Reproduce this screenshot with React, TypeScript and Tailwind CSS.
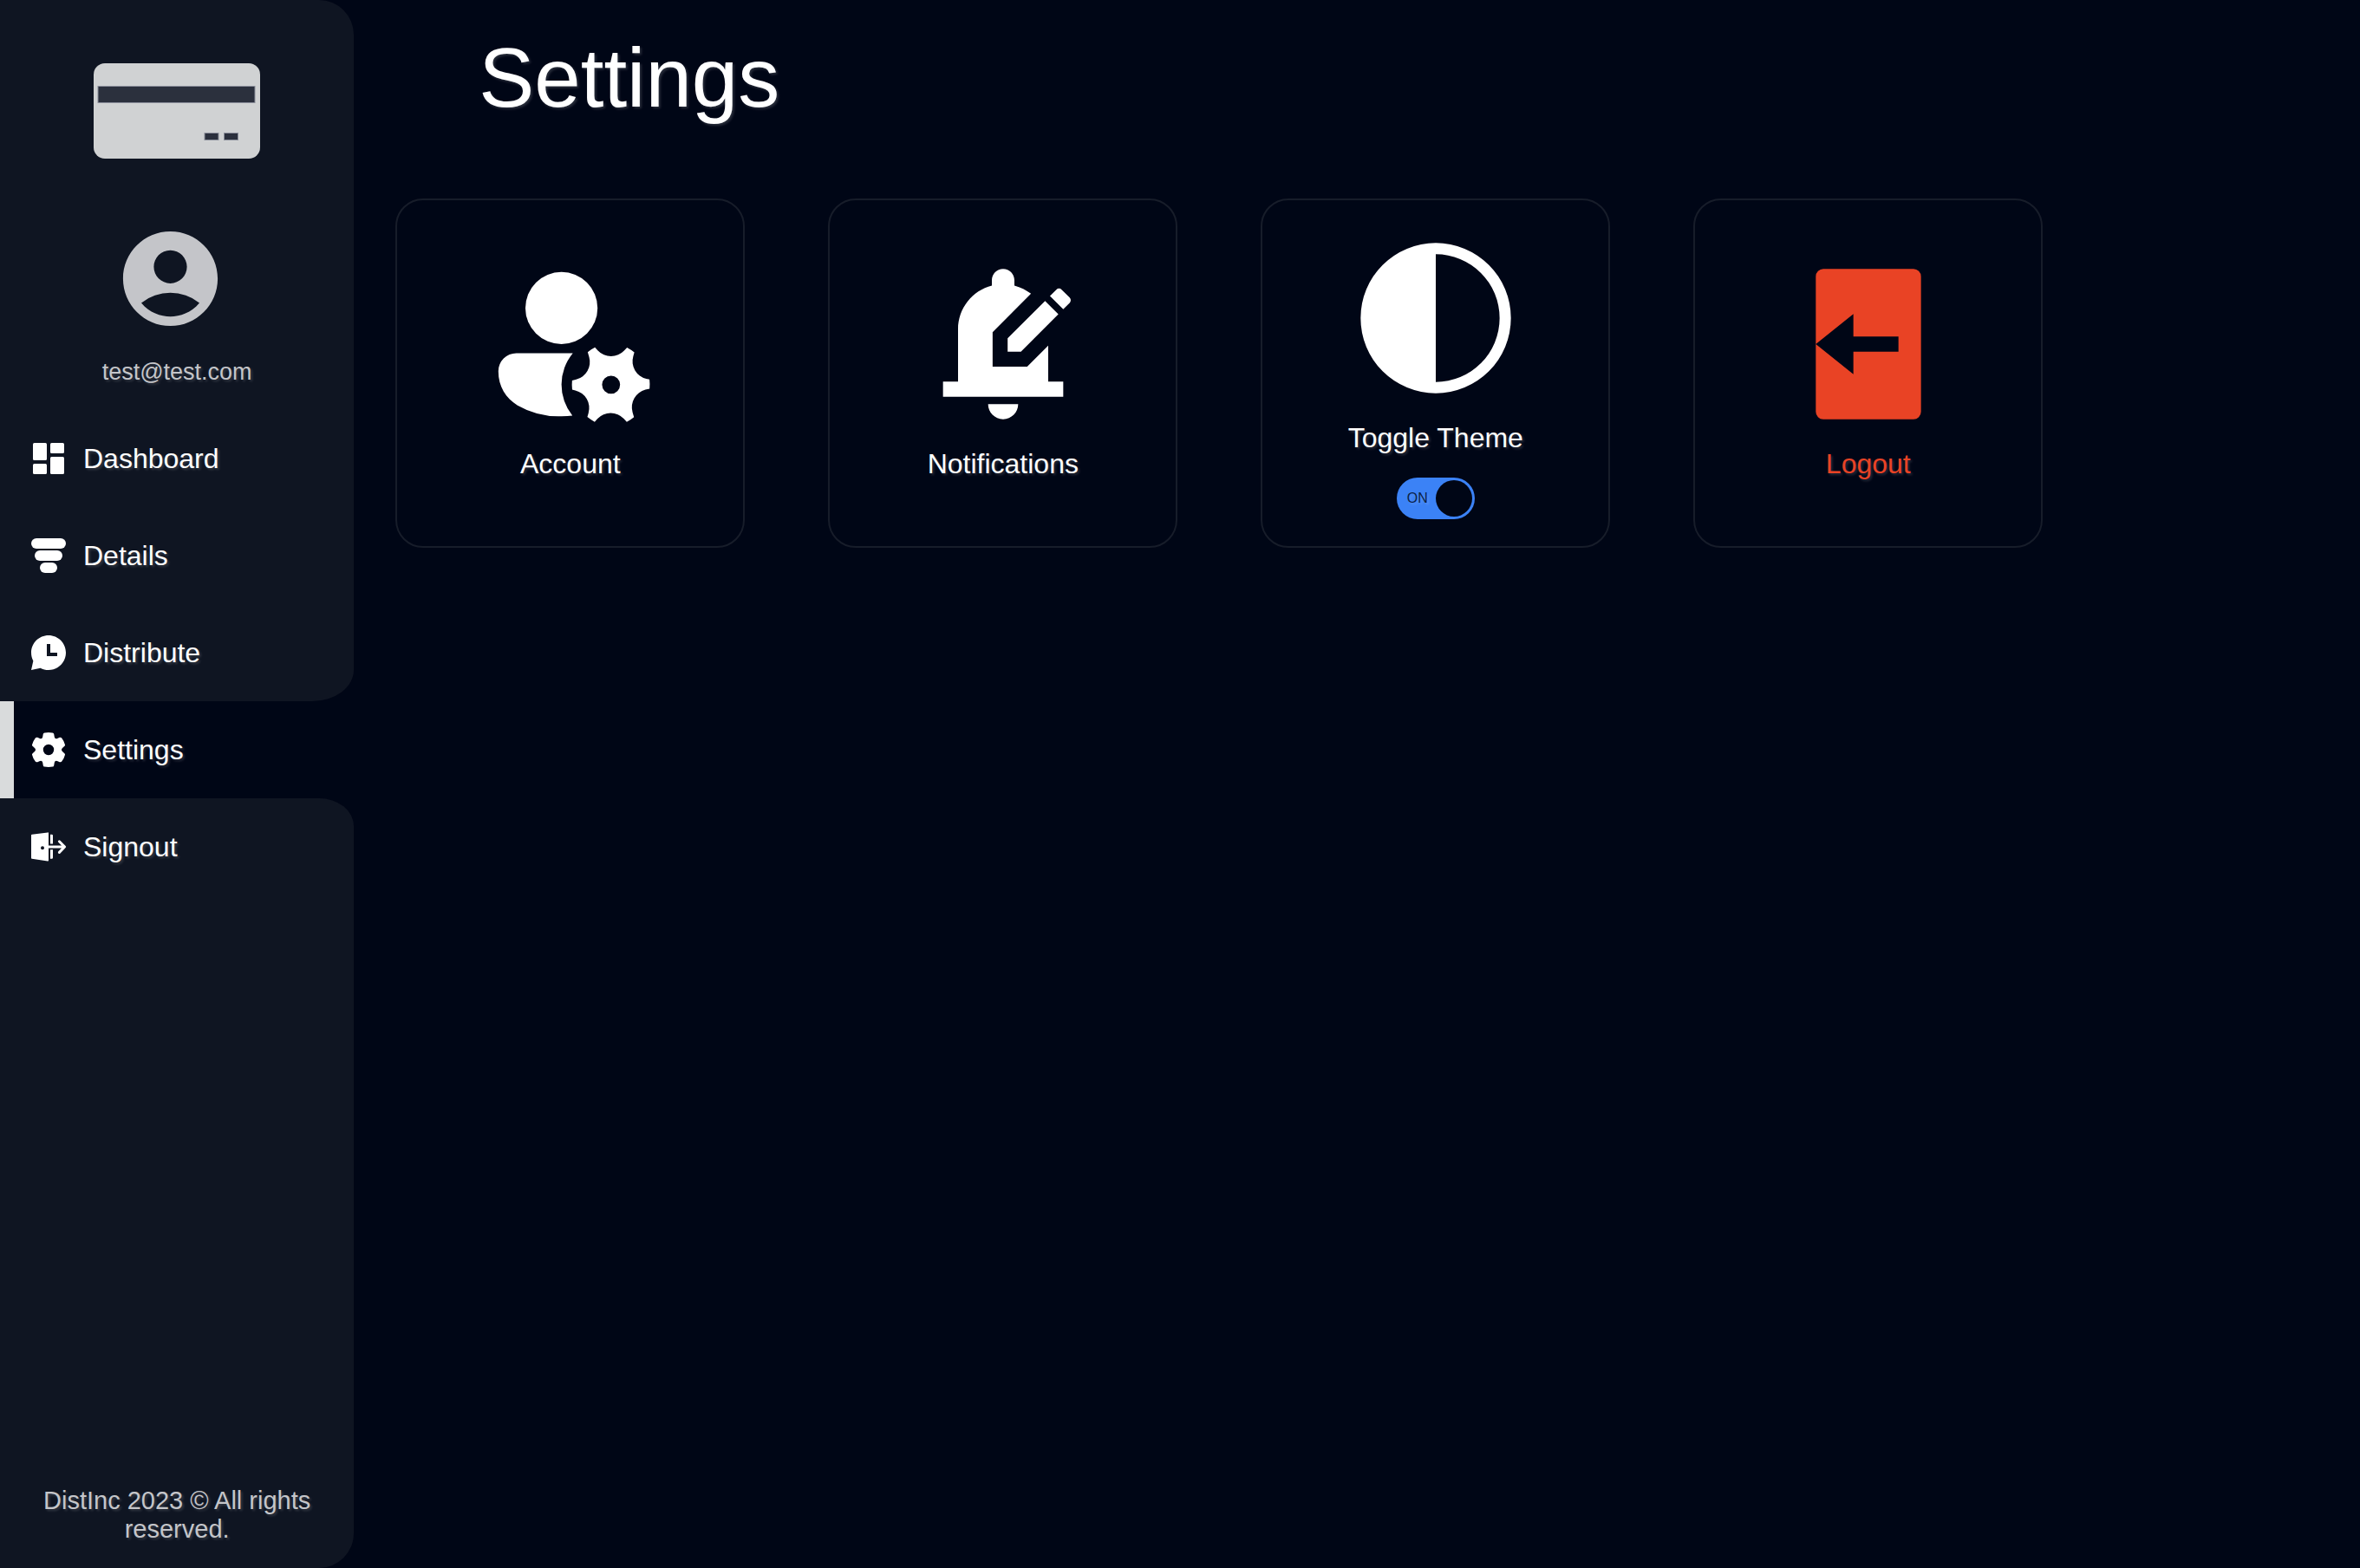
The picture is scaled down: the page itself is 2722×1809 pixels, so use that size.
import { useState, type ReactNode } from "react";
import { MdAccountCircle, MdEditNotifications } from "react-icons/md";
import { RiChatHistoryFill } from "react-icons/ri";

function CardLogo() {
  return (
    <svg viewBox="0 0 192 110" className="h-[110px] w-48" aria-hidden="true">
      <rect width="192" height="110" rx="13" fill="#d0d2d3" />
      <g fill="#2b303d" stroke="#8b8f9b" strokeWidth="1">
        <rect x="5" y="26.5" width="181" height="19" />
        <rect x="128" y="80.5" width="16" height="8" />
        <rect x="150.5" y="80.5" width="16" height="8" />
      </g>
    </svg>
  );
}

function DashboardIcon() {
  return (
    <svg viewBox="0 0 24 24" className="size-12" fill="currentColor" aria-hidden="true">
      <rect x="3" y="3" width="8" height="10" rx="0.8" />
      <rect x="3" y="15" width="8" height="6" rx="0.8" />
      <rect x="13" y="3" width="8" height="6" rx="0.8" />
      <rect x="13" y="11" width="8" height="10" rx="0.8" />
    </svg>
  );
}

function DetailsIcon() {
  return (
    <svg viewBox="0 0 24 24" className="size-12" fill="currentColor" aria-hidden="true">
      <rect x="2" y="2" width="20" height="6" rx="3" />
      <rect x="4" y="9" width="16" height="6" rx="3" />
      <rect x="7" y="16" width="10" height="6" rx="3" />
    </svg>
  );
}

function GearIcon() {
  return (
    <svg viewBox="0 0 24 24" className="size-12" fill="currentColor" fillRule="evenodd" aria-hidden="true">
      <path d="M9.6 2.2Q12 1.8 14.4 2.2Q15 2.3 15.1 2.9L15.4 4.6Q15.7 6 17 5.5L18.4 4.9Q19.2 4.7 19.6 5.2Q21 7 21.5 9.1Q21.6 9.6 21.2 9.9L20 11Q19 12 20 13L21.2 14.1Q21.6 14.4 21.5 14.9Q21 17 19.6 18.8Q19.2 19.3 18.4 19.1L17 18.5Q15.7 18 15.4 19.4L15.1 21.1Q15 21.7 14.4 21.8Q12 22.2 9.6 21.8Q9 21.7 8.9 21.1L8.6 19.4Q8.3 18 7 18.5L5.6 19.1Q4.8 19.3 4.4 18.8Q3 17 2.5 14.9Q2.4 14.4 2.8 14.1L4 13Q5 12 4 11L2.8 9.9Q2.4 9.6 2.5 9.1Q3 7 4.4 5.2Q4.8 4.7 5.6 4.9L7 5.5Q8.3 6 8.6 4.6L8.9 2.9Q9 2.3 9.6 2.2ZM12 8.9a3.1 3.1 0 1 0 0 6.2a3.1 3.1 0 0 0 0-6.2Z" />
    </svg>
  );
}

function SignoutIcon() {
  return (
    <svg viewBox="0 0 24 24" className="size-12" fill="currentColor" fillRule="evenodd" aria-hidden="true">
      <path d="M2.4 4.9L11.5 3.7Q12 3.6 12 4.1V19.7Q12 20.3 11.5 20.2L2.4 18.9Q2 18.8 2 18.4V5.3Q2 4.9 2.4 4.9ZM8.5 11.6a1 1 0 1 0 0 2a1 1 0 0 0 0-2Z" />
      <path d="M13 4.9h.9q.6 0 .6.6v4.7H13ZM13 13.6h1.5v4.7q0 .6-.6.6H13Z" />
      <path
        d="M12 12H21.2M18.2 8.9L21.3 12L18.2 15.2"
        fill="none"
        stroke="currentColor"
        strokeWidth="1.5"
        strokeLinecap="round"
        strokeLinejoin="round"
      />
    </svg>
  );
}

function AccountIcon() {
  return (
    <svg viewBox="0 0 20 20" className="size-52" fill="currentColor" aria-hidden="true">
      <circle cx="9" cy="6" r="4" />
      <path d="M4 11h6.26a5.5 5.5 0 0 0-.05 6.94Q9.7 18 9 18a9.14 9.14 0 0 1-4.87-1.2C2.83 15.97 2 14.7 2 13a2 2 0 0 1 2-2Z" />
      <path d="M12.07 11.45a2 2 0 0 1-1.43 2.48l-.46.12a4.7 4.7 0 0 0 .01 1.01l.35.08a2 2 0 0 1 1.45 2.52l-.12.42c.25.21.52.39.81.54l.32-.34a2 2 0 0 1 2.91 0l.33.35c.28-.15.55-.33.8-.53l-.16-.56a2 2 0 0 1 1.43-2.48l.46-.12a4.7 4.7 0 0 0-.01-1.01l-.35-.08a2 2 0 0 1-1.45-2.51l.12-.42a4.32 4.32 0 0 0-.81-.54l-.32.34a2 2 0 0 1-2.91 0l-.33-.35c-.28.15-.55.32-.8.53l.16.55Zm2.43 4.05a1 1 0 1 1 0-2a1 1 0 0 1 0 2Z" />
    </svg>
  );
}

function ContrastIcon() {
  return (
    <svg viewBox="0 0 24 24" className="size-52" fill="currentColor" fillRule="evenodd" aria-hidden="true">
      <path d="M12 2a10 10 0 1 0 0 20a10 10 0 0 0 0-20ZM12 3.5a8.5 8.5 0 0 1 0 17Z" />
    </svg>
  );
}

function LogoutIcon() {
  return (
    <svg viewBox="0 0 24 24" className="size-52" fill="currentColor" fillRule="evenodd" aria-hidden="true">
      <path d="M6 2H18a1 1 0 0 1 1 1V21a1 1 0 0 1-1 1H6a1 1 0 0 1-1-1V3a1 1 0 0 1 1-1ZM5 12L10 16V13H16V11H10V8Z" />
    </svg>
  );
}

function NavLink({ icon, label, active = false }: { icon: ReactNode; label: string; active?: boolean }) {
  return (
    <a
      href="#"
      aria-current={active ? "page" : undefined}
      className={
        active
          ? "flex h-28 items-center gap-4 border-l-16 border-[#d9dbdc] pl-4"
          : "flex h-28 items-center gap-4 pl-8"
      }
    >
      {icon}
      <span>{label}</span>
    </a>
  );
}

const tileFrame =
  "flex aspect-square flex-col items-center justify-center rounded-[32px] border-2 border-[#171d2a] [text-shadow:2px_2px_3px_rgba(255,255,255,0.16)]";

function Tile({ icon, label, danger = false }: { icon: ReactNode; label: string; danger?: boolean }) {
  return (
    <button type="button" className={danger ? `${tileFrame} text-[#e94325]` : tileFrame}>
      {icon}
      <span className="py-4 leading-9">{label}</span>
    </button>
  );
}

function ThemeTile() {
  const [on, setOn] = useState(true);
  return (
    <div className={tileFrame}>
      <ContrastIcon />
      <label htmlFor="theme" className="py-4 leading-9">
        Toggle Theme
      </label>
      <div className="relative mt-3 flex h-12 w-[90px] items-center rounded-full bg-[#3b82f6] p-[3px]">
        <input
          id="theme"
          type="checkbox"
          role="switch"
          checked={on}
          onChange={() => setOn(!on)}
          className="absolute inset-0 z-10 cursor-pointer opacity-0"
        />
        <span className="flex-1 text-center text-base leading-none text-[#0a2246]">{on ? "ON" : "OFF"}</span>
        <span className={on ? "size-[42px] rounded-full bg-[#000616]" : "order-first size-[42px] rounded-full bg-[#000616]"} />
      </div>
    </div>
  );
}

export default function App() {
  return (
    <div className="flex min-h-screen bg-[#000616] font-['Liberation_Sans',Arial,sans-serif] text-[32px] text-white [text-shadow:2px_2px_3px_rgba(255,255,255,0.16)]">
      <aside className="flex w-[15%] shrink-0 flex-col">
        <div className="rounded-tr-[40px] rounded-br-[48px_36px] bg-[#0f1522]">
          <div className="flex flex-col items-center pt-[73px] pb-[26px]">
            <CardLogo />
            <MdAccountCircle className="mt-[73px] mr-4 size-[131px] text-[#c4c5c9]" aria-hidden="true" />
            <p className="mt-6 text-[27px] leading-9 text-[#c4c5c9]">test@test.com</p>
          </div>
          <nav aria-label="Pages">
            <NavLink icon={<DashboardIcon />} label="Dashboard" />
            <NavLink icon={<DetailsIcon />} label="Details" />
            <NavLink icon={<RiChatHistoryFill className="size-12" aria-hidden="true" />} label="Distribute" />
          </nav>
        </div>
        <NavLink icon={<GearIcon />} label="Settings" active />
        <div className="flex flex-1 flex-col justify-between rounded-tr-[40px_32px] rounded-br-[40px] bg-[#0f1522]">
          <NavLink icon={<SignoutIcon />} label="Signout" />
          <footer className="px-8 pb-7 text-center text-[29px] leading-[33px] text-[#c4c5c9]">
            DistInc 2023 © All rights reserved.
          </footer>
        </div>
      </aside>
      <main className="flex-1 px-12 pt-8">
        <h1 className="mb-[81px] pl-24 text-[96px] leading-[116px]">Settings</h1>
        <div className="grid grid-cols-[repeat(auto-fill,403px)] gap-24">
          <Tile icon={<AccountIcon />} label="Account" />
          <Tile icon={<MdEditNotifications className="size-52" aria-hidden="true" />} label="Notifications" />
          <ThemeTile />
          <Tile icon={<LogoutIcon />} label="Logout" danger />
        </div>
      </main>
    </div>
  );
}
